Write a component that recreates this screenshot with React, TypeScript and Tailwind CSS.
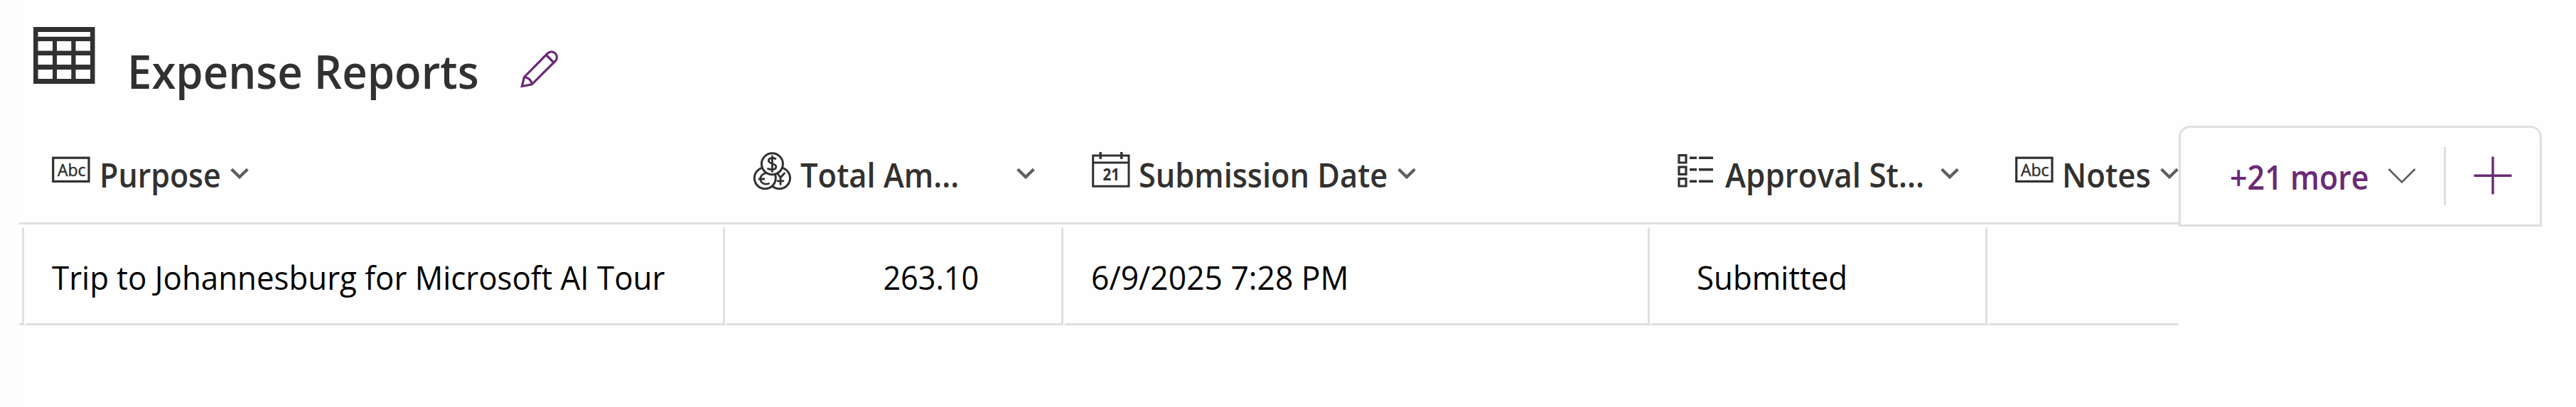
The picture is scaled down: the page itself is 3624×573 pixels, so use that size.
import type { ReactNode } from "react";

const INK = "#323130";

function TableIcon() {
  return (
    <svg className="mt-[37px] ml-[46px] h-[82px] w-[88px] shrink-0" viewBox="0 0 88 82" fill={INK}>
      <path
        fillRule="evenodd"
        d="M1 1H87.5V81H1ZM7.5 8V14.7H81V8ZM7.5 21V34.5H28V21ZM34 21V34.5H54.3V21ZM60.5 21V34.5H81V21ZM7.5 41V54H28V41ZM34 41V54H54.3V41ZM60.5 41V54H81V41ZM7.5 61V74H28V61ZM34 61V74H54.3V61ZM60.5 61V74H81V61Z"
      />
    </svg>
  );
}

function PencilIcon() {
  return (
    <svg
      className="mt-[70px] h-[54px] w-[54px] shrink-0"
      viewBox="0 0 54 54"
      fill="none"
      stroke="#6b2a75"
      strokeWidth="3.2"
    >
      <path d="M5.5 38.5L38.3 5.2A7.6 7.6 0 0 1 49.2 16L16.2 48.8L2.3 51.5Z" />
      <path d="M5.5 38.5C11.5 39 16 43.5 16.2 48.8M36.5 7.5L47 18" />
    </svg>
  );
}

function IconBox({ children }: { children: ReactNode }) {
  return (
    <svg className="mt-[36px] h-[56px] w-[56px] shrink-0" viewBox="0 0 56 56" fill="none" stroke={INK}>
      {children}
    </svg>
  );
}

function TextIcon() {
  return (
    <IconBox>
      <rect x="2.7" y="9.2" width="50.3" height="33.2" strokeWidth="3.2" />
      <text
        x="9"
        y="34.5"
        fill={INK}
        strokeWidth="0.5"
        fontSize="23"
        fontFamily="'Open Sans', sans-serif"
        fontWeight="500"
        textLength="39.5"
        lengthAdjust="spacingAndGlyphs"
      >
        Abc
      </text>
    </IconBox>
  );
}

function CurrencyIcon() {
  return (
    <IconBox>
      <g strokeWidth="3">
        <circle cx="37.5" cy="37.8" r="15" />
        <circle cx="17.3" cy="37.8" r="15" fill="#fefefe" />
        <circle cx="27.4" cy="17.8" r="15" fill="#fefefe" />
      </g>
      <g strokeWidth="2.8" strokeLinecap="round" strokeLinejoin="round">
        <path d="M32 10.5C29.5 9 22.3 8.8 22.3 13.3C22.3 18 32.8 16.5 32.8 21.7C32.8 26.5 24.5 26.3 21.5 24.5M27.4 7V28.5" />
        <path d="M17.5 31C12.5 32.5 10.6 36 10.8 39.5C11 44.5 16.5 47.5 22.5 45.5M9 39H16" />
        <path d="M34.5 31L39 37L44.5 31M39 37V46.5M35 41.8H43" />
      </g>
    </IconBox>
  );
}

function CalendarIcon() {
  return (
    <IconBox>
      <path strokeWidth="3" d="M2.7 6H53V49.2H2.7ZM2.7 16H53" />
      <path strokeWidth="3.4" d="M13.2 1V11M42.8 1V11" />
      <text
        x="16.5"
        y="40.8"
        fill={INK}
        stroke="none"
        fontSize="23"
        fontFamily="'Open Sans', sans-serif"
        fontWeight="700"
        textLength="23.5"
        lengthAdjust="spacingAndGlyphs"
      >
        21
      </text>
    </IconBox>
  );
}

function ChoiceIcon() {
  return (
    <IconBox>
      <path strokeWidth="3.2" d="M3 5.7H13V16H3ZM3 22.2H13V32.4H3ZM3 38.7H13V49H3Z" />
      <path
        strokeWidth="3.4"
        d="M18 9.2H28M31 9.2H51M18 25.8H28M31 25.8H51M18 42.3H28M31 42.3H51"
      />
    </IconBox>
  );
}

function SmallChevron() {
  return (
    <svg
      className="mt-[58px] h-[18px] w-[26px] shrink-0"
      viewBox="0 0 26 18"
      fill="none"
      stroke="#605e5c"
      strokeWidth="4.2"
    >
      <path d="M1.7 3.2L13 14.3L24.3 3.2" />
    </svg>
  );
}

function HeaderCell({ width, icon, label, labelClass }: { width: string; icon: ReactNode; label: string; labelClass: string }) {
  return (
    <div className={`flex shrink-0 items-start pl-[38px] ${width}`}>
      {icon}
      <span className={`mt-[39px] shrink-0 origin-left text-[46.5px] leading-[60px] font-semibold whitespace-nowrap text-[#323130] ${labelClass}`}>
        {label}
      </span>
      <SmallChevron />
    </div>
  );
}

function Cell({ width, children }: { width: string; children?: ReactNode }) {
  return (
    <div
      className={`h-[139px] shrink-0 border-[3px] border-t-transparent border-r-[#e0dfde] border-b-[#e0dfde] border-l-transparent pt-[38px] text-[46.5px] leading-[60px] whitespace-nowrap text-black ${width}`}
    >
      {children}
    </div>
  );
}

export default function App() {
  return (
    <div className="flex h-[573px] w-[3624px] overflow-hidden bg-[#fefefe] font-['Open_Sans',sans-serif]">
      <div className="w-[27px] shrink-0 bg-[#fdfdfd]" />
      <main className="flex flex-col">
        <header className="-ml-[27px] flex h-[177px] items-start">
          <TableIcon />
          <h1 className="mt-[60px] ml-[45px] w-[553px] origin-left scale-x-[0.948] text-[65px] leading-[80px] font-semibold whitespace-nowrap text-[#323130]">
            Expense Reports
          </h1>
          <PencilIcon />
        </header>

        <section className="flex items-start">
          <div className="w-[3038px] overflow-hidden">
            <div className="flex h-[139px] border-b-[3px] border-[#e0dfde] pl-[7px]">
              <HeaderCell width="w-[986px]" icon={<TextIcon />} label="Purpose" labelClass="ml-[12px] w-[184px] scale-x-[0.923]" />
              <HeaderCell width="w-[476px] ml-px" icon={<CurrencyIcon />} label="Total Am..." labelClass="ml-[11px] w-[304px] scale-x-[0.936]" />
              <HeaderCell width="w-[824px]" icon={<CalendarIcon />} label="Submission Date" labelClass="ml-[11px] w-[364px] scale-x-[0.932]" />
              <HeaderCell width="w-[475px]" icon={<ChoiceIcon />} label="Approval St..." labelClass="ml-[12px] w-[303px] scale-x-[0.946]" />
              <HeaderCell width="w-[269px]" icon={<TextIcon />} label="Notes" labelClass="ml-[11px] w-[138px] scale-x-[0.94]" />
            </div>
            <div className="-ml-[3px] flex pt-[3px]">
              <Cell width="w-[10px]" />
              <Cell width="w-[986px] pl-[36px]">
                <span className="inline-block origin-left scale-x-[0.943]">Trip to Johannesburg for Microsoft AI Tour</span>
              </Cell>
              <Cell width="w-[476px] pr-[116px] text-right">
                <span className="inline-block origin-right scale-x-[0.928]">263.10</span>
              </Cell>
              <Cell width="w-[825px] pl-[36px]">
                <span className="inline-block origin-left scale-x-[0.955]">6/9/2025 7:28 PM</span>
              </Cell>
              <Cell width="w-[475px] pl-[63px]">
                <span className="inline-block origin-left scale-x-[0.943]">Submitted</span>
              </Cell>
              <Cell width="w-[300px]" />
            </div>
          </div>

          <div className="flex h-[142px] w-[511px] items-start rounded-t-[16px] border-[3px] border-[#e0dfde] bg-[#fefefe]">
            <span className="mt-[39px] ml-[69px] w-[222px] shrink-0 origin-left scale-x-[0.925] text-[46.5px] leading-[60px] font-semibold whitespace-nowrap text-[#6b2a75]">
              +21 more
            </span>
            <svg className="mt-[56px] h-[24px] w-[40px] shrink-0" viewBox="0 0 40 24" fill="none" stroke="#605e5c" strokeWidth="2.6">
              <path d="M1.5 2L20 20.5L38.5 2" />
            </svg>
            <div className="mt-[27px] ml-[39px] h-[82px] w-[3px] shrink-0 bg-[#e0dfde]" />
            <svg className="mt-[40px] ml-[39px] h-[54px] w-[54px] shrink-0" viewBox="0 0 54 54" fill="none" stroke="#6b2a75" strokeWidth="3.4">
              <path d="M27 0.5V53.5M0.5 27.3H53.5" />
            </svg>
          </div>
        </section>
      </main>
    </div>
  );
}
